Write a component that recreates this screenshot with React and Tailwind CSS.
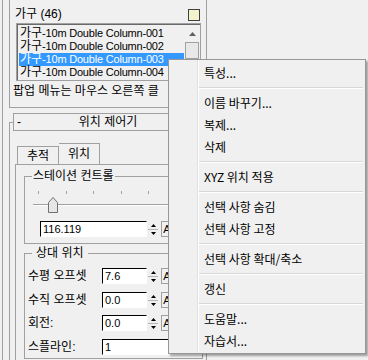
import React from "react";

const items = ["001", "002", "003", "004"];

const menu = [
  "특성...",
  "-",
  "이름 바꾸기...",
  "복제...",
  "삭제",
  "-",
  "XYZ 위치 적용",
  "-",
  "선택 사항 숨김",
  "선택 사항 고정",
  "-",
  "선택 사항 확대/축소",
  "-",
  "갱신",
  "-",
  "도움말...",
  "자습서...",
];

function Spinner() {
  return (
    <div className="ml-[1px] flex h-[16px] w-[10px] flex-col bg-[#f0f0f0]">
      <div className="flex h-[8px] items-center justify-center">
        <svg width="5" height="3" viewBox="0 0 5 3">
          <path d="M0 3 L2.5 0 L5 3 Z" fill="#000" />
        </svg>
      </div>
      <div className="flex h-[8px] items-center justify-center border-t border-[#b4b4b4]">
        <svg width="5" height="3" viewBox="0 0 5 3">
          <path d="M0 0 L5 0 L2.5 3 Z" fill="#000" />
        </svg>
      </div>
    </div>
  );
}

function Field({ value, width = "w-[45px]", spin = true }) {
  return (
    <div className="flex items-center">
      <div
        className={`${width} h-[16px] border border-t-black border-l-black border-r-white border-b-white bg-white pl-[2px] text-[11px] leading-[14px]`}
      >
        {value}
      </div>
      {spin && <Spinner />}
      {spin && (
        <div className="ml-[3px] flex h-[16px] w-[12px] items-center justify-center border border-[#a0a0a0] text-[11px] leading-[14px]">
          A
        </div>
      )}
    </div>
  );
}

export default function App() {
  return (
    <div className="relative h-[360px] w-[368px] overflow-hidden bg-[#f0f0f0] font-['Liberation_Sans','Noto_Sans_CJK_KR',sans-serif] text-[12px] text-black">
      <div className="ml-[2px] h-full w-[205px] border-l border-r border-[#a0a0a0] pl-[6px] pr-[3px]">
        {/* object list rollout */}
        <div className="h-[108px] border-b border-l border-[#a0a0a0]">
          <div className="flex items-start justify-between pl-[5px] pt-[7px]">
            <span className="leading-[14px]">가구 (46)</span>
            <div className="mr-[3px] mt-[2px] h-[12px] w-[12px] border border-[#404040] bg-[#f2f2cc]" />
          </div>
          <div className="ml-[6px] mt-[2px] flex h-[58px] w-[185px] border border-[#a0a0a0]">
            <div className="flex-1 border-l border-t border-[#696969] pl-[1px] pt-[2px]">
              {items.map((n) => (
                <div
                  key={n}
                  className={`h-[13px] whitespace-nowrap pl-[1px] leading-[13px] ${
                    n === "003" ? "bg-[#3399ff] text-white" : ""
                  }`}
                >
                  <span className="text-[12px]">가구</span>
                  <span className="text-[11px] tracking-[-0.2px]">-10m Double Column-{n}</span>
                </div>
              ))}
            </div>
            <div className="w-[16px] border-t border-[#696969] bg-[#f0f0f0]">
              <div className="flex h-[17px] items-center justify-center">
                <svg width="7" height="4" viewBox="0 0 7 4">
                  <path d="M0 4 L3.5 0 L7 4 Z" fill="#606060" />
                </svg>
              </div>
              <div className="ml-[1px] h-[17px] w-[14px] border border-[#a0a0a0] bg-[#e8e8e8]" />
            </div>
          </div>
          <div className="mt-[3px] w-[158px] overflow-hidden whitespace-nowrap pl-[3px] leading-[14px]">
            팝업 메뉴는 마우스 오른쪽 클
          </div>
        </div>

        {/* position controller rollout */}
        <div className="mt-[14px] h-[260px] border-l border-t border-[#a0a0a0]">
          <div className="relative -mt-[10px] ml-[3px] flex h-[18px] items-center border border-[#a0a0a0] bg-[#f0f0f0] pl-[3px]">
            <span className="w-[10px]">-</span>
            <span className="flex-1 pr-[13px] text-center">위치 제어기</span>
          </div>

          <div className="ml-[5px] mt-[12px] flex h-[21px] items-end">
            <div className="ml-[2px] flex h-[18px] w-[42px] items-center justify-center border-l border-r border-t border-[#a0a0a0]">
              추적
            </div>
            <div className="flex h-[21px] w-[41px] items-center justify-center border-r border-t border-[#a0a0a0] bg-[#f0f0f0]">
              위치
            </div>
          </div>

          <div className="ml-[5px] h-[200px] border-l border-t border-[#a0a0a0] pl-[8px]">
            <fieldset className="mt-[4px] border border-[#a0a0a0] pb-[6px]">
              <legend className="ml-[7px] px-[1px] leading-[14px]">스테이션 컨트롤</legend>
              <svg width="150" height="34" viewBox="0 0 150 34" className="block">
                {[13, 41, 68, 96, 123].map((x) => (
                  <line key={x} x1={x + 0.5} y1="8" x2={x + 0.5} y2="11" stroke="#a0a0a0" />
                ))}
                <line x1="8" y1="21.5" x2="150" y2="21.5" stroke="#a0a0a0" />
                <line x1="8" y1="22.5" x2="150" y2="22.5" stroke="#ffffff" />
                <path d="M23.5 29.5 V19.5 L28 14.5 L32.5 19.5 V29.5 Z" fill="#e6e6e6" stroke="#707070" />
              </svg>
              <div className="ml-[15px] mt-[4px]">
                <Field value="116.119" width="w-[107px]" />
              </div>
            </fieldset>

            <fieldset className="mt-[2px] border border-[#a0a0a0] pb-[2px] pl-[3px]">
              <legend className="ml-[4px] px-[4px] leading-[14px]">상대 위치</legend>
              <div className="mt-[7px] flex items-center">
                <span className="w-[74px]">수평 오프셋</span>
                <Field value="7.6" />
              </div>
              <div className="mt-[6px] flex items-center">
                <span className="w-[74px]">수직 오프셋</span>
                <Field value="0.0" />
              </div>
              <div className="mt-[5px] flex items-center">
                <span className="w-[74px]">회전:</span>
                <Field value="0.0" />
              </div>
              <div className="mt-[6px] flex items-center">
                <span className="w-[74px]">스플라인:</span>
                <Field value="1" width="w-[100px]" spin={false} />
              </div>
            </fieldset>

            <div className="mt-[6px] h-[20px] border-l border-t border-[#a0a0a0]" />
          </div>
        </div>
      </div>

      {/* context menu */}
      <div className="absolute left-[168px] top-[59px] flex h-[295px] w-[198px] border border-[#979797] bg-[#f0f0f0] shadow-[2px_2px_2px_rgba(0,0,0,0.35)] font-['Noto_Sans_CJK_KR',sans-serif]">
        <div className="w-[29px] border-r border-[#e0e0e0]" />
        <div className="flex-1 border-l border-white py-[2px] pr-[2px]">
          {menu.map((m, i) =>
            m === "-" ? (
              <div key={i} className="flex h-[8px] items-center">
                <div className="w-full border-b border-t border-b-white border-t-[#d7d7d7]" />
              </div>
            ) : (
              <div key={i} className="flex h-[22px] items-center whitespace-nowrap pl-[5px] leading-[22px]">
                {m}
              </div>
            )
          )}
        </div>
      </div>
    </div>
  );
}
